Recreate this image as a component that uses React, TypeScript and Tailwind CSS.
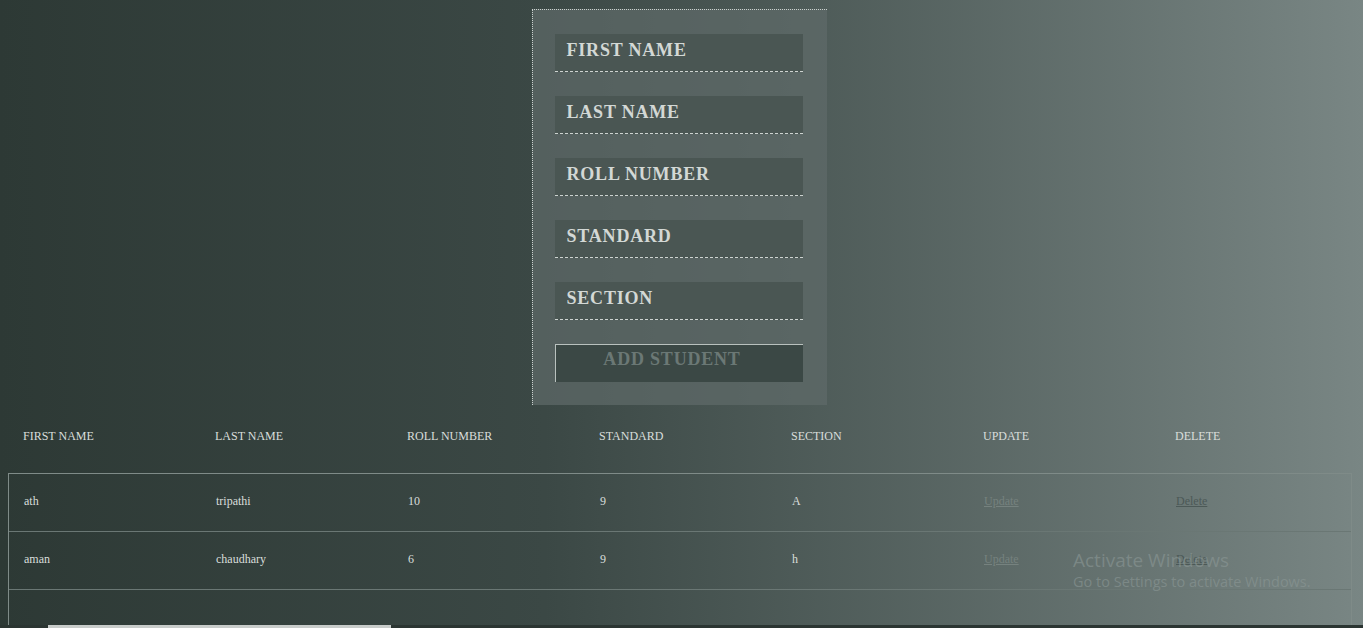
import React from 'react';

interface Student {
  firstName: string;
  lastName: string;
  roll: string;
  standard: string;
  section: string;
}

const students: Student[] = [
  { firstName: 'ath', lastName: 'tripathi', roll: '10', standard: '9', section: 'A' },
  { firstName: 'aman', lastName: 'chaudhary', roll: '6', standard: '9', section: 'h' },
];

const fields = ['FIRST NAME', 'LAST NAME', 'ROLL NUMBER', 'STANDARD', 'SECTION'];
const headers = ['FIRST NAME', 'LAST NAME', 'ROLL NUMBER', 'STANDARD', 'SECTION', 'UPDATE', 'DELETE'];

const App: React.FC = () => {
  return (
    <div
      className="flex h-[628px] w-full flex-col overflow-hidden bg-gradient-to-r from-[#2d3935] via-[#3b4845] via-40% to-[#798684] text-[#d9dedb]"
      style={{ fontFamily: '"Liberation Serif", "DejaVu Serif", serif' }}
    >
      <div className="flex shrink-0 justify-center pt-[9px]">
        <form className="ml-[-5px] flex w-[295px] flex-col gap-[24px] border-t border-l border-dotted border-[#c9d0cd] bg-[#5f6b69]/70 pl-[22px] pr-[24px] pt-[24px] pb-[23px]">
          {fields.map((f) => (
            <div
              key={f}
              className="h-[38px] w-[248px] border-b border-dashed border-[#cdd3d0] bg-[#4a5653] px-[12px] pt-[3px] text-[18px] font-bold tracking-[0.8px] text-[#d3d8d5]"
            >
              {f}
            </div>
          ))}
          <button
            type="button"
            className="h-[38px] w-[248px] border-t border-l border-[#b9c1be] bg-[#3b4845] pr-[14px] pb-[8px] text-[18px] font-bold tracking-[0.8px] text-[#6b7875]"
          >
            ADD STUDENT
          </button>
        </form>
      </div>

      <div className="mt-[14px] flex min-h-0 flex-1 flex-col pl-[8px] pr-[11px]">
        <div className="flex h-[54px] shrink-0 items-center pl-[15px] pb-[21px] text-[12px]">
          {headers.map((h) => (
            <div key={h} className="w-[192px] shrink-0">
              {h}
            </div>
          ))}
        </div>
        <div className="min-h-0 flex-1 overflow-hidden border-t border-l border-r border-[#7f8b88]">
          {students.map((s) => (
            <div
              key={s.firstName}
              className="flex h-[58px] items-center border-b border-[#6a7774] pl-[15px] pb-[4px] text-[12px]"
            >
              <div className="w-[192px] shrink-0">{s.firstName}</div>
              <div className="w-[192px] shrink-0">{s.lastName}</div>
              <div className="w-[192px] shrink-0">{s.roll}</div>
              <div className="w-[192px] shrink-0">{s.standard}</div>
              <div className="w-[192px] shrink-0">{s.section}</div>
              <div className="w-[192px] shrink-0 text-[#76827f] underline">Update</div>
              <div className="w-[192px] shrink-0 text-[#4c5957] underline">Delete</div>
            </div>
          ))}
          <div className="ml-[1064px] mt-[-42px] text-[#8c9896]/60" style={{ fontFamily: '"Open Sans", sans-serif' }}>
            <div className="text-[19px] leading-[24px]">Activate Windows</div>
            <div className="text-[14.5px] leading-[20px]">Go to Settings to activate Windows.</div>
          </div>
        </div>
      </div>

      <div className="h-[3px] shrink-0 bg-[#2b3532]">
        <div className="ml-[48px] h-full w-[343px] bg-[#c8ccca]" />
      </div>
    </div>
  );
};

export default App;
